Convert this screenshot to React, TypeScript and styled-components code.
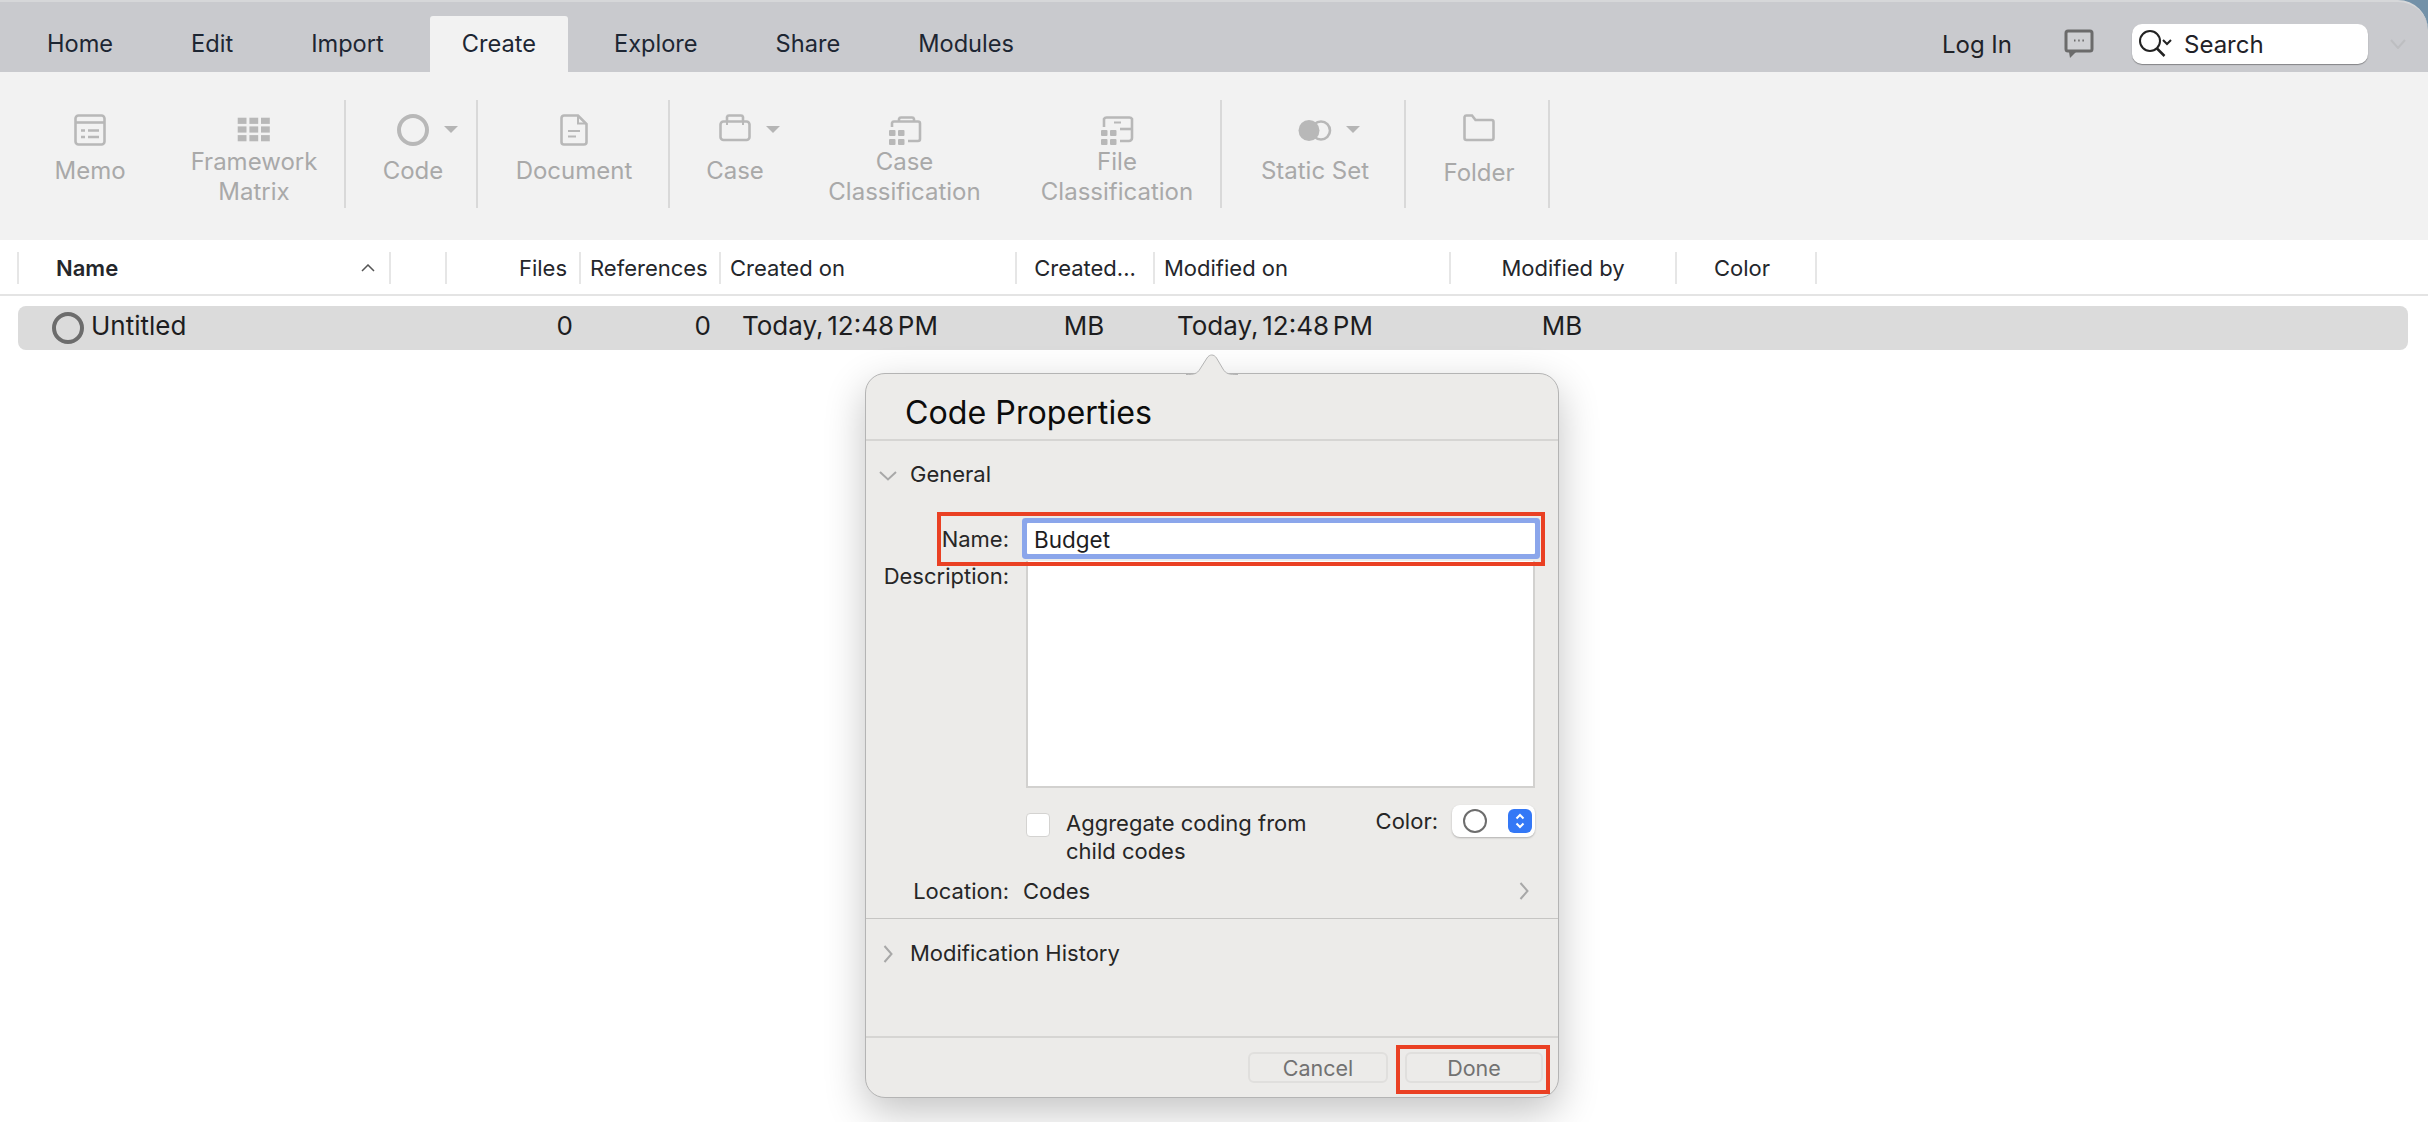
import React from "react";
import styled, { createGlobalStyle } from "styled-components";

const GlobalStyle = createGlobalStyle`
  html, body {
    margin: 0;
    padding: 0;
    background: #fff;
    overflow: hidden;
  }
  body {
    font-family: Inter, "Liberation Sans", sans-serif;
  }
  * {
    box-sizing: border-box;
  }
`;

const COLUMNS = "372px 56px 134px 140px 296px 138px 296px 226px 142px";

const Page = styled.div`
  position: relative;
  width: 2428px;
  height: 1122px;
  background: #fff;
  overflow: hidden;
`;

const TopBarBack = styled.div`
  background: #7391a8;
`;

const TopBar = styled.div`
  display: flex;
  height: 72px;
  padding: 16px 22px 0 15px;
  background: #c9cace;
  border-top: 2px solid #d6d7d9;
  border-top-right-radius: 30px;
`;

const Tabs = styled.div`
  display: flex;
  gap: 14px;
  margin-top: -2px;
`;

const Tab = styled.div<{ $active?: boolean }>`
  display: flex;
  align-items: center;
  padding: 0 32px 1px;
  font-size: 23.6px;
  color: #1d2633;
  background: ${(p) => (p.$active ? "#f2f2f2" : "transparent")};
  border-radius: 3px 3px 0 0;
`;

const TopRight = styled.div`
  display: flex;
  align-items: center;
  margin-left: auto;
  margin-top: -2px;
`;

const LogIn = styled.div`
  font-size: 24px;
  color: #1f2228;
  margin-right: 52px;
`;

const SearchBox = styled.div`
  display: flex;
  align-items: center;
  width: 236px;
  height: 40px;
  margin: 0 22px 0 38px;
  padding-left: 6px;
  background: #fff;
  border-radius: 10px;
  box-shadow: 0 1px 1px rgba(0, 0, 0, 0.35);
  font-size: 24px;
  color: #1f2228;
  gap: 12px;
`;

const Ribbon = styled.div`
  display: flex;
  height: 168px;
  padding-top: 28px;
  background: #f2f2f2;
`;

const RibbonGroup = styled.div<{ $w: number }>`
  display: flex;
  flex: none;
  width: ${(p) => p.$w}px;
  height: 108px;
  border-right: 2px solid #d9d9d9;
`;

const RibbonItem = styled.div<{ $w: number }>`
  position: relative;
  display: flex;
  flex: none;
  flex-direction: column;
  align-items: center;
  width: ${(p) => p.$w}px;
  padding-top: 14px;
  color: #a9a9a9;
`;

const RibbonLabel = styled.div<{ $top: number }>`
  margin-top: ${(p) => p.$top}px;
  font-size: 24px;
  line-height: 30px;
  text-align: center;
  white-space: nowrap;
`;

const RibbonCaret = styled.div`
  position: absolute;
  top: 26px;
  left: calc(50% + 31px);
  width: 0;
  height: 0;
  border-left: 7px solid transparent;
  border-right: 7px solid transparent;
  border-top: 7px solid #b5b5b5;
`;

const HeaderRow = styled.div`
  display: grid;
  grid-template-columns: ${COLUMNS};
  height: 56px;
  padding: 12px 0 10px 17px;
  border-bottom: 2px solid #e4e4e4;
  background: #fff;
`;

const HeaderCell = styled.div<{ $align?: string; $pad?: string; $bold?: boolean; $last?: boolean }>`
  display: flex;
  align-items: center;
  justify-content: ${(p) => p.$align || "flex-start"};
  padding: ${(p) => p.$pad || "0"};
  border-left: 2px solid #e6e6e6;
  border-right: ${(p) => (p.$last ? "2px solid #e6e6e6" : "0")};
  font-size: 22px;
  font-weight: ${(p) => (p.$bold ? 600 : 400)};
  color: #24262b;
  white-space: nowrap;
`;

const SortCaret = styled.svg`
  margin-left: auto;
`;

const DataRow = styled.div`
  display: grid;
  grid-template-columns: 371px 56px 134px 140px 296px 138px 296px 226px 142px;
  width: 2390px;
  height: 44px;
  margin: 10px 0 0 18px;
  background: #dbdbdb;
  border-radius: 8px;
`;

const DataCell = styled.div<{ $align?: string; $pad?: string }>`
  display: flex;
  align-items: center;
  justify-content: ${(p) => p.$align || "flex-start"};
  padding: ${(p) => p.$pad || "0"};
  font-size: 26px;
  word-spacing: -3.5px;
  color: #1d1d1f;
  white-space: nowrap;
`;

const RowText = styled.span`
  margin-top: -5px;
`;

const CodeDot = styled.span`
  flex: none;
  width: 32px;
  height: 32px;
  margin-right: 7px;
  border: 4px solid #6c6c6c;
  border-radius: 50%;
`;

const Popover = styled.div`
  position: absolute;
  left: 865px;
  top: 373px;
  display: flex;
  flex-direction: column;
  width: 694px;
  height: 725px;
  background: #ecebe9;
  border: 1px solid #b4b4b4;
  border-radius: 20px;
  box-shadow: 0 14px 40px rgba(0, 0, 0, 0.24);
  color: #1f1f1f;
`;

const PopoverArrow = styled.svg`
  position: absolute;
  left: 318px;
  top: -20px;
`;

const PopoverTitle = styled.div`
  flex: none;
  height: 67px;
  padding: 19px 0 0 39px;
  border-bottom: 2px solid #d6d5d3;
  font-size: 32.2px;
  line-height: 40px;
  color: #0c0c0c;
`;

const SectionHead = styled.div<{ $h: number }>`
  display: flex;
  flex: none;
  align-items: center;
  height: ${(p) => p.$h}px;
  padding-top: 2px;
  font-size: 22px;
  color: #262626;
`;

const Disclosure = styled.span`
  display: flex;
  flex: none;
  justify-content: center;
  width: 44px;
  padding-top: 3px;
`;

const Form = styled.div`
  display: flex;
  flex-direction: column;
  margin-top: 17px;
  padding: 0 23px 0 0;
`;

const FormRow = styled.div<{ $top?: number; $center?: boolean }>`
  display: grid;
  grid-template-columns: 143px 1fr;
  column-gap: 17px;
  align-items: ${(p) => (p.$center ? "center" : "start")};
  margin-top: ${(p) => p.$top || 0}px;
`;

const FieldLabel = styled.div<{ $nudge?: number }>`
  padding-top: ${(p) => p.$nudge || 0}px;
  font-size: 22px;
  line-height: 30px;
  text-align: right;
  color: #262626;
  white-space: nowrap;
`;

const NameInput = styled.div`
  position: relative;
  display: flex;
  align-items: center;
  height: 31px;
  margin-left: 1px;
  padding: 2px 0 0 7px;
  background: #fff;
  border-radius: 1px;
  box-shadow: 0 0 0 5px #8ba6eb;
  font-size: 22.5px;
  color: #1d1d1f;
`;

const DescriptionBox = styled.div`
  height: 227px;
  background: #fff;
  border: 2px solid #d2d1cf;
  border-top: 0;
`;

const OptionsRow = styled.div`
  display: flex;
  align-items: flex-start;
  margin: 17px 0 0 160px;
`;

const Checkbox = styled.span`
  flex: none;
  width: 24px;
  height: 24px;
  margin: 8px 16px 0 0;
  background: #fff;
  border: 1px solid #d4d3d1;
  border-radius: 4px;
`;

const OptionText = styled.div`
  margin-top: 4px;
  font-size: 22px;
  line-height: 28px;
  color: #262626;
`;

const ColorPicker = styled.div`
  display: flex;
  align-items: center;
  margin-left: auto;
  font-size: 22px;
  color: #262626;
  gap: 14px;
`;

const ColorPopup = styled.div`
  display: flex;
  align-items: center;
  justify-content: space-between;
  width: 83px;
  height: 32px;
  padding: 0 3px 0 11px;
  background: #fff;
  border-radius: 8px;
  box-shadow: 0 1px 2px rgba(0, 0, 0, 0.25);
`;

const ColorSwatch = styled.span`
  width: 24px;
  height: 24px;
  border: 2px solid #6d6d6d;
  border-radius: 50%;
`;

const Stepper = styled.span`
  display: flex;
  width: 24px;
  height: 24px;
  background: #3478f6;
  border-radius: 6px;
`;

const LocationValue = styled.div`
  display: flex;
  align-items: center;
  justify-content: space-between;
  margin-left: -3px;
  padding-right: 6px;
  font-size: 22px;
  line-height: 30px;
  color: #262626;
`;

const Divider = styled.div`
  flex: none;
  height: 1px;
  margin-top: 12px;
  background: #c6c5c3;
`;

const Footer = styled.div`
  display: flex;
  flex: none;
  justify-content: flex-end;
  gap: 17px;
  height: 61px;
  margin-top: auto;
  padding: 14px 15px 0 0;
  border-top: 2px solid #d6d5d3;
`;

const FooterButton = styled.div<{ $w: number }>`
  display: flex;
  align-items: center;
  justify-content: center;
  width: ${(p) => p.$w}px;
  height: 31px;
  border: 2px solid #e0dfdd;
  border-radius: 6px;
  font-size: 21.5px;
  color: #727272;
`;

const RedBox = styled.div<{ $x: number; $y: number; $w: number; $h: number }>`
  position: absolute;
  left: ${(p) => p.$x}px;
  top: ${(p) => p.$y}px;
  width: ${(p) => p.$w}px;
  height: ${(p) => p.$h}px;
  border: 4px solid #ea4023;
  pointer-events: none;
`;

const C = "#b8b8b8";

function RibbonIcon({ children }: { children: React.ReactNode }) {
  return (
    <svg
      width="36"
      height="34"
      viewBox="-18 0 36 34"
      fill="none"
      stroke={C}
      strokeWidth="2.6"
      style={{ flex: "none" }}
    >
      {children}
    </svg>
  );
}

function ClassGrid() {
  return (
    <g fill={C} stroke="none">
      <rect x="-16" y="16" width="6.5" height="6" rx="1" />
      <rect x="-7" y="16" width="6.5" height="6" rx="1" />
      <rect x="-16" y="25" width="6.5" height="6" rx="1" />
      <rect x="-7" y="25" width="6.5" height="6" rx="1" />
    </g>
  );
}

const icons: Record<string, React.ReactNode> = {
  memo: (
    <>
      <rect x="-14.5" y="1.5" width="29" height="29" rx="3" />
      <path d="M-14 8.5H14" />
      <path d="M-9 16.5H-5M-9 23H-5M-2 16.5H9M-2 23H9" />
    </>
  ),
  framework: (
    <g fill={C} stroke="none">
      {[3.7, 12.4, 21.1].map((y) =>
        [-16.3, -4.6, 7].map((x) => <rect key={`${x}-${y}`} x={x} y={y} width="8.8" height="6.2" />)
      )}
    </g>
  ),
  code: <circle cx="0" cy="16" r="14" strokeWidth="4" />,
  document: (
    <>
      <path d="M-10 1.5H4L12.5 10V28A2.5 2.5 0 0 1 10 30.5H-10A2.5 2.5 0 0 1 -12.5 28V4A2.5 2.5 0 0 1 -10 1.5Z" />
      <path d="M4 2V9.5H12" strokeWidth="2" />
      <path d="M-6 17H6M-6 22.5H2" strokeWidth="2" />
    </>
  ),
  case: (
    <>
      <rect x="-14.5" y="7.5" width="29" height="18.5" rx="3" />
      <path d="M-8 8V3A2 2 0 0 1 -6 1.5H6A2 2 0 0 1 8 3V8" />
      <path d="M-8 7V11M8 7V11" strokeWidth="2" />
    </>
  ),
  caseClass: (
    <>
      <path d="M-13 13V9A2 2 0 0 1 -11 7.5H13A2 2 0 0 1 15 9.5V25A2 2 0 0 1 13 27H3" />
      <path d="M-6 7V5A2 2 0 0 1 -4 3.5H7A2 2 0 0 1 9 5V7" />
      <ClassGrid />
    </>
  ),
  fileClass: (
    <>
      <path d="M-13 13V5A3 3 0 0 1 -10 3.5H12A3 3 0 0 1 15 5V24A3 3 0 0 1 12 27H3" />
      <path d="M3 15H15" />
      <path d="M-3 8.5H4" strokeWidth="2" />
      <ClassGrid />
    </>
  ),
  staticSet: (
    <>
      <circle cx="6" cy="16.5" r="9" />
      <circle cx="-6" cy="16.5" r="10.5" fill={C} stroke="none" />
    </>
  ),
  folder: (
    <path d="M-14.5 24V3A2 2 0 0 1 -12.5 1.5H-7L-3.5 6H12.5A2 2 0 0 1 14.5 8V24A2 2 0 0 1 12.5 26H-12.5A2 2 0 0 1 -14.5 24Z" />
  ),
};

type RibbonEntry = { w: number; icon: string; label: string[]; top: number; caret?: boolean };
type RibbonGroupData = { w: number; items: RibbonEntry[] };

const ribbon: RibbonGroupData[] = [
  {
    w: 346,
    items: [
      { w: 180, icon: "memo", label: ["Memo"], top: 8 },
      { w: 148, icon: "framework", label: ["Framework", "Matrix"], top: -1 },
    ],
  },
  { w: 132, items: [{ w: 134, icon: "code", label: ["Code"], top: 8, caret: true }] },
  { w: 192, items: [{ w: 192, icon: "document", label: ["Document"], top: 8 }] },
  {
    w: 552,
    items: [
      { w: 130, icon: "case", label: ["Case"], top: 8, caret: true },
      { w: 209, icon: "caseClass", label: ["Case", "Classification"], top: -1 },
      { w: 216, icon: "fileClass", label: ["File", "Classification"], top: -1 },
    ],
  },
  { w: 184, items: [{ w: 186, icon: "staticSet", label: ["Static Set"], top: 8, caret: true }] },
  { w: 144, items: [{ w: 146, icon: "folder", label: ["Folder"], top: 10 }] },
];

function ChevronDown() {
  return (
    <svg width="18" height="10" viewBox="0 0 18 10" fill="none" stroke="#a8a8a8" strokeWidth="2">
      <path d="M1 1L9 8.5L17 1" />
    </svg>
  );
}

function ChevronRight() {
  return (
    <svg width="10" height="18" viewBox="0 0 10 18" fill="none" stroke="#a8a8a8" strokeWidth="2">
      <path d="M1.5 1L8.5 9L1.5 17" />
    </svg>
  );
}

export default function App() {
  return (
    <Page>
      <GlobalStyle />
      <TopBarBack>
        <TopBar>
          <Tabs>
            <Tab>Home</Tab>
            <Tab>Edit</Tab>
            <Tab>Import</Tab>
            <Tab $active>Create</Tab>
            <Tab>Explore</Tab>
            <Tab>Share</Tab>
            <Tab>Modules</Tab>
          </Tabs>
          <TopRight>
            <LogIn>Log In</LogIn>
            <svg width="30" height="30" viewBox="0 0 30 30" fill="none">
              <rect x="2" y="2" width="26" height="20" rx="2" fill="#cfd0d3" stroke="#6b6b6b" strokeWidth="3" />
              <path d="M5 23H12L6 29Z" fill="#6b6b6b" />
              <path d="M10 11.5H11.5M14.2 11.5H15.7M18.4 11.5H19.9" stroke="#6b6b6b" strokeWidth="2" />
            </svg>
            <SearchBox>
              <svg width="34" height="32" viewBox="0 0 34 32" fill="none" stroke="#222" strokeWidth="2">
                <circle cx="12" cy="13" r="10" />
                <path d="M19 20.5L26.5 28" strokeWidth="2.5" />
                <path d="M25 12L29 16L33 12" />
              </svg>
              Search
            </SearchBox>
            <svg width="16" height="10" viewBox="0 0 16 10" fill="none" stroke="#bdbec1" strokeWidth="2">
              <path d="M1 1L8 9L15 1" />
            </svg>
          </TopRight>
        </TopBar>
      </TopBarBack>

      <Ribbon>
        {ribbon.map((group) => (
          <RibbonGroup key={group.items[0].icon} $w={group.w}>
            {group.items.map((item) => (
              <RibbonItem key={item.icon} $w={item.w}>
                <RibbonIcon>{icons[item.icon]}</RibbonIcon>
                {item.caret && <RibbonCaret />}
                <RibbonLabel $top={item.top}>
                  {item.label.map((line) => (
                    <div key={line}>{line}</div>
                  ))}
                </RibbonLabel>
              </RibbonItem>
            ))}
          </RibbonGroup>
        ))}
      </Ribbon>

      <HeaderRow>
        <HeaderCell $bold $pad="0 14px 0 37px">
          Name
          <SortCaret width="14" height="8" viewBox="0 0 14 8" fill="none" stroke="#555" strokeWidth="1.5">
            <path d="M1 7L7 1L13 7" />
          </SortCaret>
        </HeaderCell>
        <HeaderCell />
        <HeaderCell $align="flex-end" $pad="0 12px 0 0">
          Files
        </HeaderCell>
        <HeaderCell $pad="0 0 0 9px">References</HeaderCell>
        <HeaderCell $pad="0 0 0 9px">Created on</HeaderCell>
        <HeaderCell $align="center">Created...</HeaderCell>
        <HeaderCell $pad="0 0 0 9px">Modified on</HeaderCell>
        <HeaderCell $align="center">Modified by</HeaderCell>
        <HeaderCell $align="center" $last $pad="0 8px 0 0">
          Color
        </HeaderCell>
      </HeaderRow>

      <DataRow>
        <DataCell $pad="0 0 0 34px">
          <CodeDot />
          <RowText>Untitled</RowText>
        </DataCell>
        <DataCell />
        <DataCell $align="flex-end" $pad="0 6px 0 0">
          <RowText>0</RowText>
        </DataCell>
        <DataCell $align="flex-end" $pad="0 8px 0 0">
          <RowText>0</RowText>
        </DataCell>
        <DataCell $pad="0 0 0 23px">
          <RowText>Today, 12:48 PM</RowText>
        </DataCell>
        <DataCell $align="center">
          <RowText>MB</RowText>
        </DataCell>
        <DataCell $pad="0 0 0 24px">
          <RowText>Today, 12:48 PM</RowText>
        </DataCell>
        <DataCell $align="center">
          <RowText>MB</RowText>
        </DataCell>
        <DataCell />
      </DataRow>

      <Popover>
        <PopoverArrow width="56" height="21" viewBox="0 0 56 21" fill="none">
          <path
            d="M2 20.5C10 20.5 13 20 16 15L23 4C25.5 0 30 0 32.5 4L39 15C42 20 45 20.5 54 20.5"
            fill="#ecebe9"
            stroke="#b4b4b4"
            strokeWidth="1"
          />
        </PopoverArrow>
        <PopoverTitle>Code Properties</PopoverTitle>
        <SectionHead $h={64}>
          <Disclosure>
            <ChevronDown />
          </Disclosure>
          General
        </SectionHead>
        <Form>
          <FormRow $center>
            <FieldLabel $nudge={2}>Name:</FieldLabel>
            <NameInput>Budget</NameInput>
          </FormRow>
          <FormRow $top={7}>
            <FieldLabel>Description:</FieldLabel>
            <DescriptionBox />
          </FormRow>
          <OptionsRow>
            <Checkbox />
            <OptionText>
              Aggregate coding from
              <br />
              child codes
            </OptionText>
            <ColorPicker>
              Color:
              <ColorPopup>
                <ColorSwatch />
                <Stepper>
                  <svg width="24" height="24" viewBox="0 0 24 24" fill="none" stroke="#fff" strokeWidth="2">
                    <path d="M8.5 9.5L12 6L15.5 9.5M8.5 14.5L12 18L15.5 14.5" />
                  </svg>
                </Stepper>
              </ColorPopup>
            </ColorPicker>
          </OptionsRow>
          <FormRow $top={11} $center>
            <FieldLabel>Location:</FieldLabel>
            <LocationValue>
              Codes
              <ChevronRight />
            </LocationValue>
          </FormRow>
        </Form>
        <Divider />
        <SectionHead $h={65}>
          <Disclosure>
            <ChevronRight />
          </Disclosure>
          Modification History
        </SectionHead>
        <Footer>
          <FooterButton $w={140}>Cancel</FooterButton>
          <FooterButton $w={138}>Done</FooterButton>
        </Footer>
        <RedBox $x={71} $y={138} $w={608} $h={54} />
        <RedBox $x={530} $y={671} $w={154} $h={49} />
      </Popover>
    </Page>
  );
}
